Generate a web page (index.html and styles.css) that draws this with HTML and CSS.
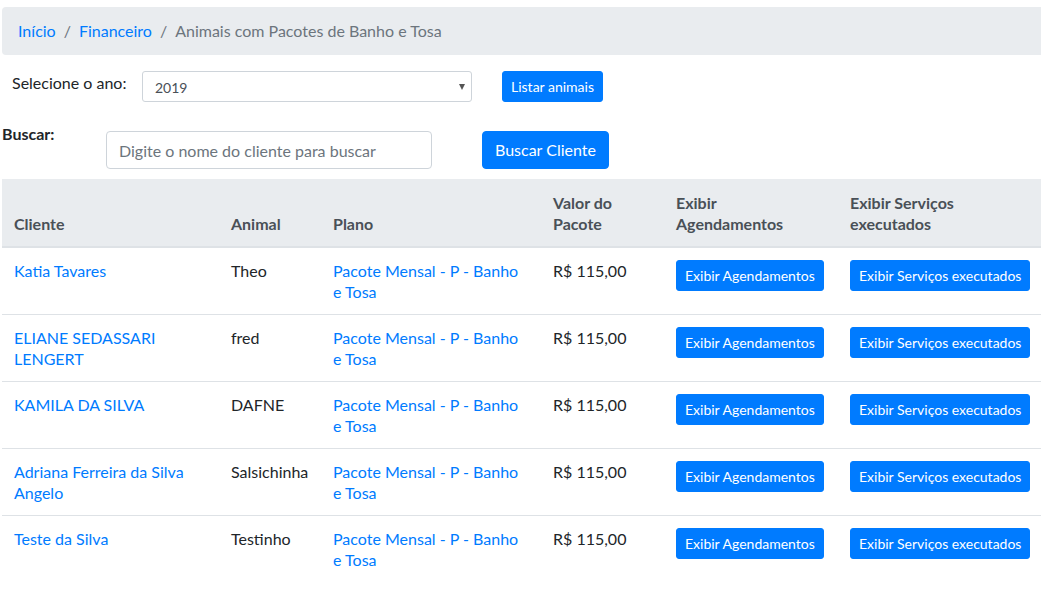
FILE: index.html
```html
<!DOCTYPE html>
<html lang="pt-BR">
  <head>
    <meta charset="UTF-8" />
    <meta name="viewport" content="width=device-width, initial-scale=1.0" />
    <title>Animais com Pacotes de Banho e Tosa</title>
    <link rel="stylesheet" href="styles.css">
  </head>
  <body>
    <div class="page">
      <nav class="breadcrumb">
        <a href="#" class="crumb-link">Início</a>
        <span class="crumb-sep">/</span>
        <a href="#" class="crumb-link">Financeiro</a>
        <span class="crumb-sep">/</span>
        <span class="crumb-active">Animais com Pacotes de Banho e Tosa</span>
      </nav>

      <form class="filter-row">
        <label for="ano" class="filter-label">Selecione o ano:</label>
        <div class="select-wrap">
          <select id="ano" class="form-select">
            <option>2019</option>
            <option>2020</option>
          </select>
        </div>
        <button type="button" class="btn btn-sm btn-listar">Listar animais</button>
      </form>

      <form class="search-row">
        <label for="busca" class="search-label">Buscar:</label>
        <input type="text" id="busca" class="form-input" placeholder="Digite o nome do cliente para buscar" />
        <button type="button" class="btn btn-buscar">Buscar Cliente</button>
      </form>

      <table class="table">
        <colgroup>
          <col style="width: 217px" />
          <col style="width: 102px" />
          <col style="width: 220px" />
          <col style="width: 123px" />
          <col style="width: 174px" />
          <col style="width: 203px" />
        </colgroup>
        <thead>
          <tr>
            <th>Cliente</th>
            <th>Animal</th>
            <th>Plano</th>
            <th>Valor do Pacote</th>
            <th>Exibir Agendamentos</th>
            <th>Exibir Serviços executados</th>
          </tr>
        </thead>
        <tbody>
          <tr>
            <td><a href="#">Katia Tavares</a></td>
            <td>Theo</td>
            <td><a href="#">Pacote Mensal - P - Banho e Tosa</a></td>
            <td>R$ 115,00</td>
            <td><button type="button" class="btn btn-sm">Exibir Agendamentos</button></td>
            <td><button type="button" class="btn btn-sm">Exibir Serviços executados</button></td>
          </tr>
          <tr>
            <td><a href="#">ELIANE SEDASSARI LENGERT</a></td>
            <td>fred</td>
            <td><a href="#">Pacote Mensal - P - Banho e Tosa</a></td>
            <td>R$ 115,00</td>
            <td><button type="button" class="btn btn-sm">Exibir Agendamentos</button></td>
            <td><button type="button" class="btn btn-sm">Exibir Serviços executados</button></td>
          </tr>
          <tr>
            <td><a href="#">KAMILA DA SILVA</a></td>
            <td>DAFNE</td>
            <td><a href="#">Pacote Mensal - P - Banho e Tosa</a></td>
            <td>R$ 115,00</td>
            <td><button type="button" class="btn btn-sm">Exibir Agendamentos</button></td>
            <td><button type="button" class="btn btn-sm">Exibir Serviços executados</button></td>
          </tr>
          <tr>
            <td><a href="#">Adriana Ferreira da Silva Angelo</a></td>
            <td>Salsichinha</td>
            <td><a href="#">Pacote Mensal - P - Banho e Tosa</a></td>
            <td>R$ 115,00</td>
            <td><button type="button" class="btn btn-sm">Exibir Agendamentos</button></td>
            <td><button type="button" class="btn btn-sm">Exibir Serviços executados</button></td>
          </tr>
          <tr>
            <td><a href="#">Teste da Silva</a></td>
            <td>Testinho</td>
            <td><a href="#">Pacote Mensal - P - Banho e Tosa</a></td>
            <td>R$ 115,00</td>
            <td><button type="button" class="btn btn-sm">Exibir Agendamentos</button></td>
            <td><button type="button" class="btn btn-sm">Exibir Serviços executados</button></td>
          </tr>
        </tbody>
      </table>
    </div>
  </body>
</html>
```

FILE: styles.css
```css
* {
  margin: 0;
  padding: 0;
  box-sizing: border-box;
}

body {
  font-family: "Lato", "Open Sans", sans-serif;
  font-size: 16px;
  line-height: 1.5;
  color: #212529;
  background-color: #fff;
  overflow: hidden;
}

a {
  color: #007bff;
  text-decoration: none;
}

.page {
  padding: 7px 0 0 2px;
}

/* breadcrumb */
.breadcrumb {
  display: flex;
  align-items: center;
  padding: 12px 16px;
  margin-right: -6px;
  background-color: #e9ecef;
  border-radius: 4px;
}

.crumb-sep {
  padding: 0 8px;
  color: #6c757d;
}

.crumb-active {
  color: #6c757d;
}

/* filtro por ano */
.filter-row {
  display: flex;
  align-items: flex-start;
  margin-top: 16px;
  padding-left: 10px;
}

.filter-label {
  width: 130px;
}

.select-wrap {
  position: relative;
  width: 330px;
}

.select-wrap::after {
  content: "";
  position: absolute;
  right: 7px;
  top: 13px;
  border-left: 3.5px solid transparent;
  border-right: 3.5px solid transparent;
  border-top: 6px solid #555;
  pointer-events: none;
}

.form-select {
  display: block;
  width: 100%;
  height: 31px;
  padding: 4px 8px 2px 12px;
  font-family: inherit;
  font-size: 14px;
  color: #495057;
  background-color: #fff;
  border: 1px solid #ced4da;
  border-radius: 3px;
  appearance: none;
  -webkit-appearance: none;
}

.btn {
  display: inline-block;
  padding: 6px 12px;
  font-family: inherit;
  font-size: 16px;
  line-height: 1.5;
  color: #fff;
  background-color: #007bff;
  border: 1px solid #007bff;
  border-radius: 4px;
  cursor: pointer;
  white-space: nowrap;
}

.btn:hover {
  background-color: #0069d9;
}

.btn-sm {
  padding: 4px 8px;
  font-size: 14px;
  border-radius: 3px;
}

.btn-listar {
  margin-left: 30px;
}

/* busca */
.search-row {
  display: flex;
  align-items: flex-start;
  margin-top: 19px;
}

.search-label {
  width: 104px;
  font-weight: 700;
  margin-top: 1px;
}

.form-input {
  width: 326px;
  height: 38px;
  margin-top: 10px;
  padding: 6px 12px;
  font-family: inherit;
  font-size: 16px;
  color: #495057;
  border: 1px solid #ced4da;
  border-radius: 4px;
}

.form-input::placeholder {
  color: #6c757d;
}

.btn-buscar {
  margin-top: 10px;
  margin-left: 50px;
}

/* tabela */
.table {
  width: 1039px;
  margin-top: 10px;
  border-collapse: collapse;
  table-layout: fixed;
}

.table th,
.table td {
  padding: 12px;
  line-height: 21px;
  text-align: left;
  vertical-align: top;
  border-top: 1px solid #dee2e6;
}

.table thead th {
  vertical-align: bottom;
  color: #495057;
  background-color: #e9ecef;
  border-color: #e9ecef;
  border-bottom: 2px solid #dee2e6;
}
```
